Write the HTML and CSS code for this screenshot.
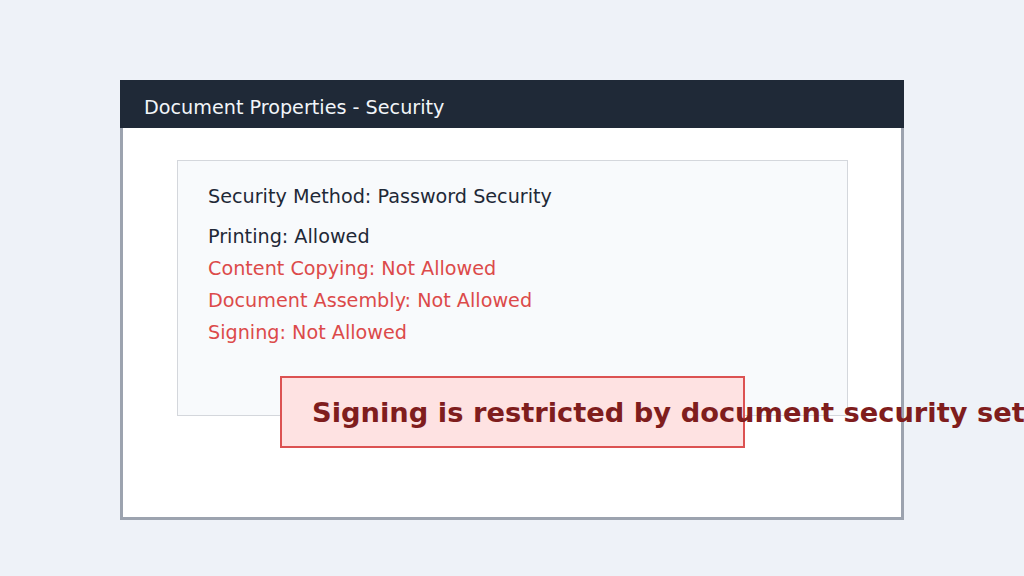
FILE: index.html
```html
<!DOCTYPE html>
<html lang="en">
<head>
<meta charset="utf-8">
<title>Document Properties - Security</title>
<link rel="stylesheet" href="styles.css">
</head>
<body>
  <div class="window">
    <div class="titlebar">Document Properties - Security</div>
    <div class="window-body">
      <div class="panel">
        <div class="method">Security Method: Password Security</div>
        <ul class="perms">
          <li>Printing: Allowed</li>
          <li class="denied">Content Copying: Not Allowed</li>
          <li class="denied">Document Assembly: Not Allowed</li>
          <li class="denied">Signing: Not Allowed</li>
        </ul>
      </div>
      <div class="banner"><span class="banner-text">Signing is restricted by document security settings</span></div>
    </div>
  </div>
</body>
</html>
```
FILE: styles.css
```css
html, body {
  margin: 0;
  padding: 0;
  width: 1024px;
  height: 576px;
  overflow: hidden;
  background: #eef2f8;
  font-family: "DejaVu Sans", sans-serif;
}
body {
  padding: 80px 0 0 120px;
  box-sizing: border-box;
}
.window {
  width: 784px;
  display: flex;
  flex-direction: column;
}
.titlebar {
  height: 48px;
  box-sizing: border-box;
  padding: 16px 24px 0;
  background: #1f2937;
  color: #f1f5f9;
  font-size: 19.2px;
  line-height: 24px;
  white-space: nowrap;
}
.window-body {
  position: relative;
  height: 392px;
  box-sizing: border-box;
  background: #ffffff;
  border: 3px solid #9ca3af;
  border-top: none;
  padding: 32px 0 0 54px;
}
.panel {
  width: 671px;
  height: 256px;
  box-sizing: border-box;
  background: #f8fafc;
  border: 1px solid #d4d7dc;
  padding: 24px 0 0 30px;
  color: #1f2937;
  font-size: 19.2px;
}
.method {
  line-height: 24px;
  margin-bottom: 12px;
}
.perms {
  list-style: none;
  margin: 0;
  padding: 0;
  line-height: 32px;
}
.denied {
  color: #dc4a4a;
}
.banner {
  position: absolute;
  left: 157px;
  top: 248px;
  width: 465px;
  height: 72px;
  box-sizing: border-box;
  background: #fee2e2;
  border: 2px solid #dc5252;
  display: flex;
  align-items: center;
  padding-left: 30px;
  white-space: nowrap;
}
.banner-text {
  font-size: 27.3px;
  font-weight: bold;
  color: #7f1d1d;
}
```
